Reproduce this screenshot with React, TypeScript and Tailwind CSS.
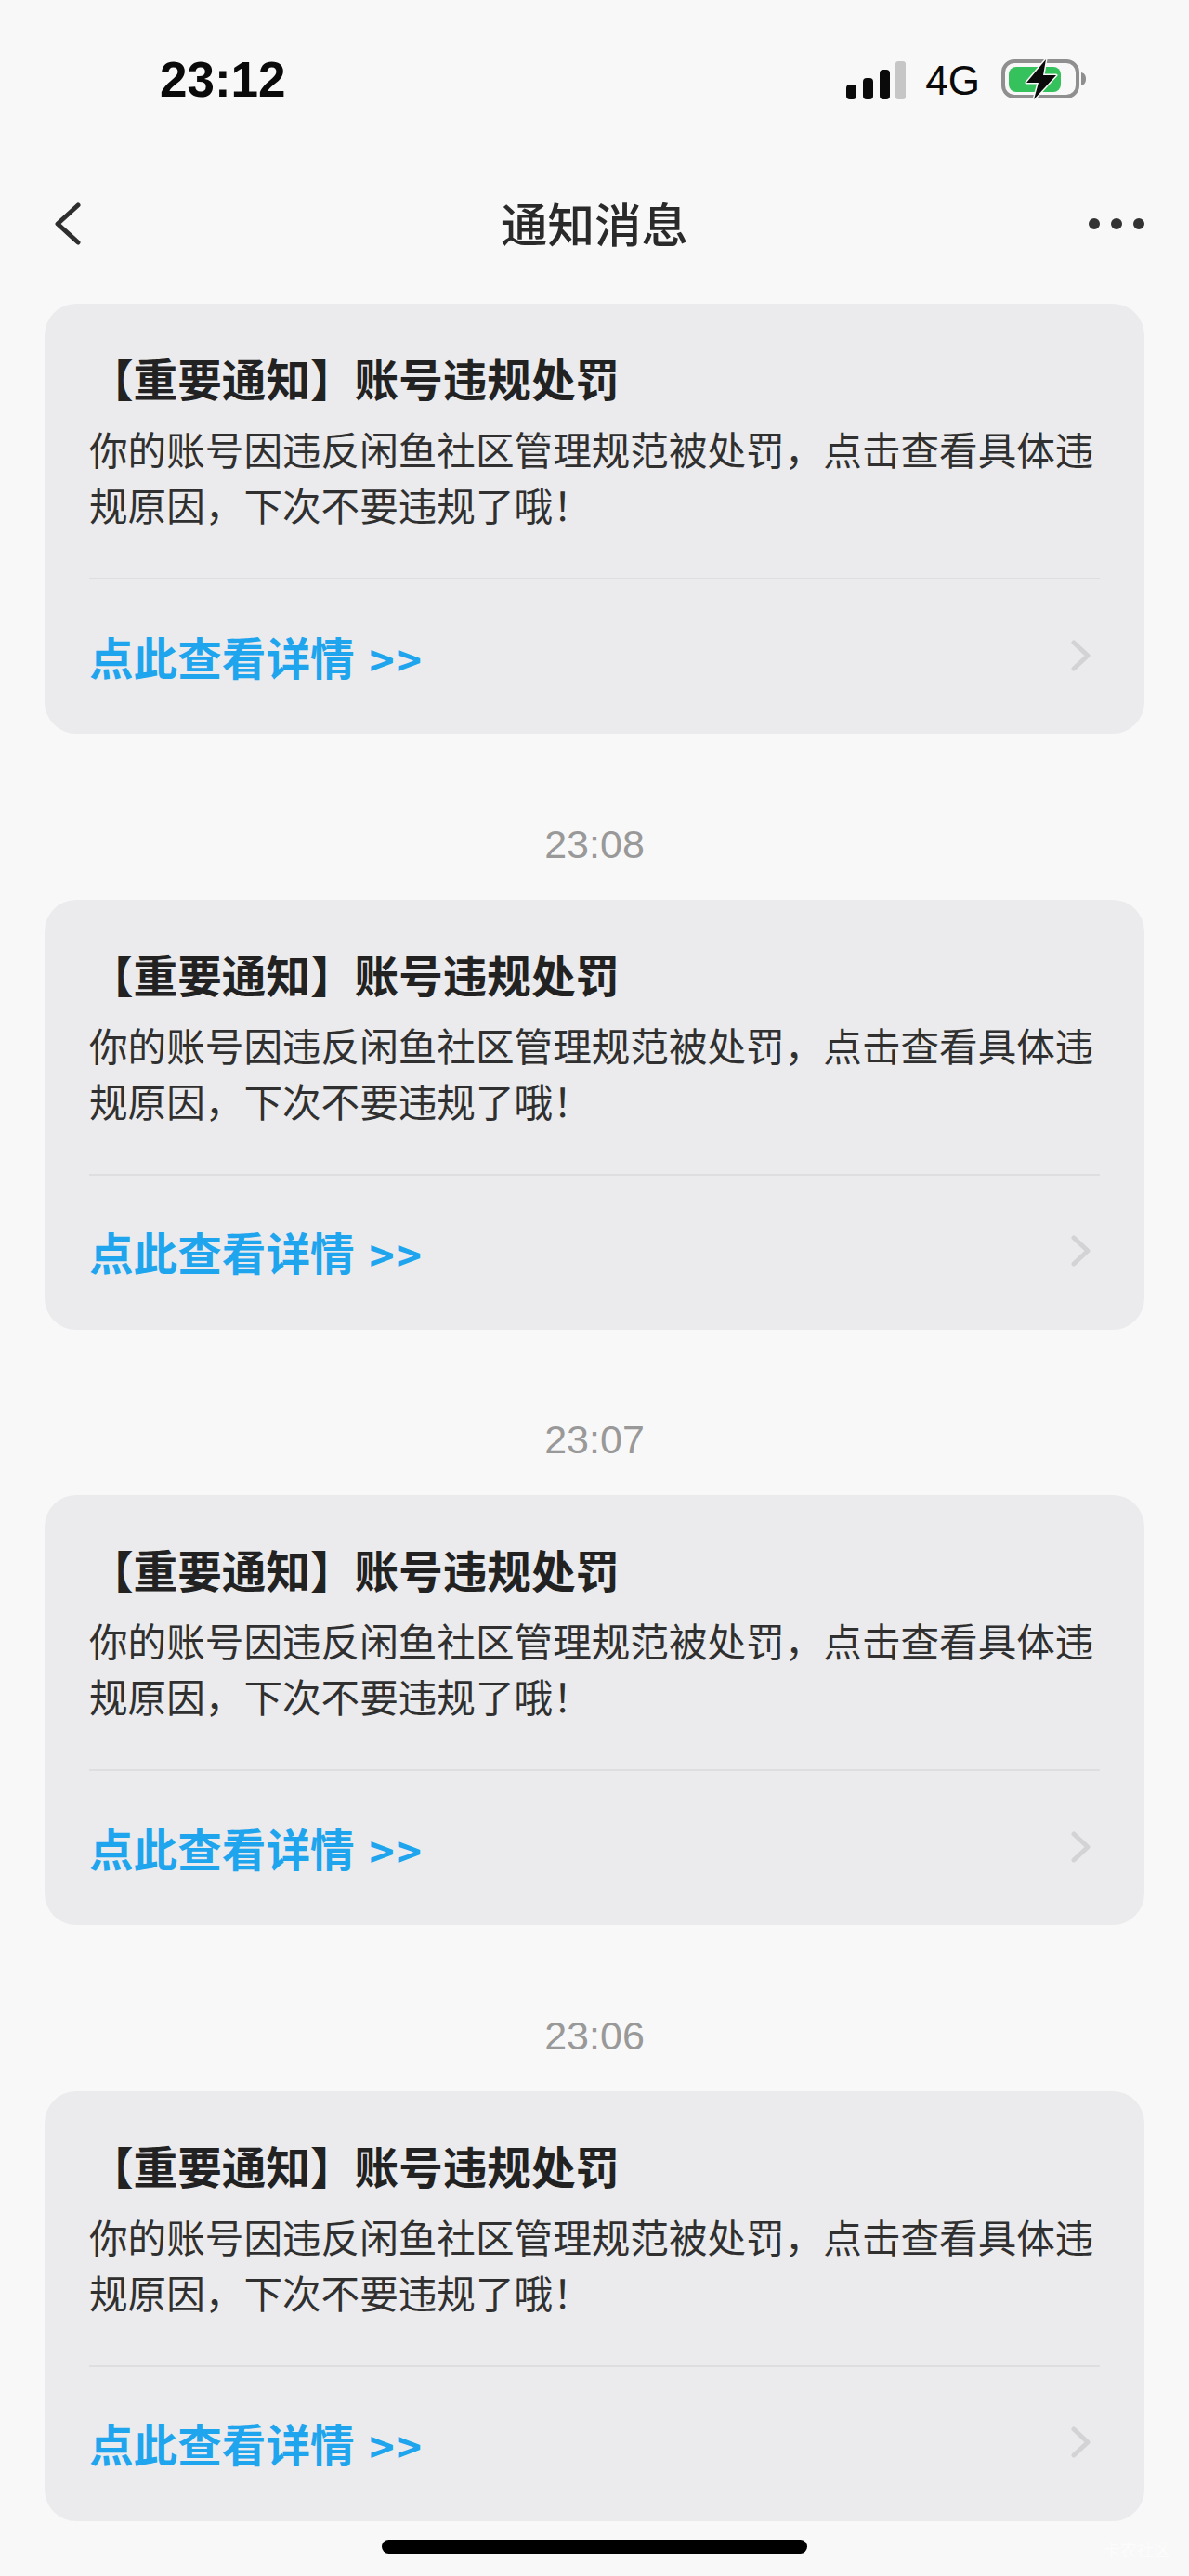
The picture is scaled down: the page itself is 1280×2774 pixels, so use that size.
const cjk = "font-['Noto_Sans_CJK_SC','Noto_Sans_CJK_TC',sans-serif]";
const latin = "font-['Liberation_Sans',Arial,sans-serif]";

function SignalIcon() {
  return (
    <svg width="66" height="42" viewBox="0 0 66 42" className="block">
      <rect x="1" y="25" width="11" height="16" rx="4" fill="#0a0a0a" />
      <rect x="19" y="18" width="11" height="23" rx="4" fill="#0a0a0a" />
      <rect x="37" y="9" width="11" height="32" rx="4" fill="#0a0a0a" />
      <rect x="54" y="0" width="11" height="41" rx="3" fill="#c6c6c6" />
    </svg>
  );
}

function BatteryIcon() {
  return (
    <svg width="96" height="46" viewBox="0 0 96 46" className="block">
      <rect x="3" y="3" width="80" height="38" rx="12" fill="none" stroke="#8f8f8f" strokeWidth="4" />
      <path d="M87 15c4 1 5 4 5 7s-1 6-5 7z" fill="#8f8f8f" />
      <rect x="9" y="9" width="56" height="27" rx="8" fill="#35c25c" />
      <path
        d="M49 1 28 26h13l-5 18 24-26H46z"
        fill="#0a0a0a"
        stroke="#f8f8f8"
        strokeWidth="3"
        strokeLinejoin="round"
        paintOrder="stroke"
      />
    </svg>
  );
}

function Card() {
  return (
    <div className={`${cjk} h-[463px] rounded-[34px] bg-[#ebebed] pl-[48px] pr-[48px]`}>
      <div className="pt-[50px] text-[47.6px] leading-[60px] font-bold whitespace-nowrap text-[#222222]">
        【重要通知】账号违规处罚
      </div>
      <div className="mt-[16px] text-[41.6px] leading-[60px] text-[#303030]">
        你的账号因违反闲鱼社区管理规范被处罚，点击查看具体违规原因，下次不要违规了哦！
      </div>
      <div className="mt-[49px] h-[2px] bg-[#dedee0]" />
      <div className="flex h-[165px] items-center justify-between">
        <span className="flex items-center text-[47.6px] leading-[60px] font-semibold whitespace-nowrap text-[#1ea5ee]">
          点此查看详情
          <span className="mt-[4px] ml-[16px] text-[46px] tracking-[2px]">&gt;&gt;</span>
        </span>
        <svg width="22" height="34" viewBox="0 0 22 34" className="mr-[9px] mb-[2px] block" fill="none">
          <path d="M3 3 18 17 3 31" stroke="#d3d3d5" strokeWidth="5" strokeLinecap="round" strokeLinejoin="round" />
        </svg>
      </div>
    </div>
  );
}

function Stamp({ time }: { time: string }) {
  return (
    <div className={`${latin} flex h-[178.67px] items-center justify-center pt-[60px] text-[43px] leading-none text-[#999999]`}>
      {time}
    </div>
  );
}

export default function App() {
  return (
    <div className="relative h-[2774px] w-[1280px] overflow-hidden bg-[#f8f8f8]">
      <div className="flex h-[174px] items-center justify-between pr-[107px] pl-[172px]">
        <span className={`${latin} mb-[3px] text-[53px] leading-none font-bold text-[#0a0a0a]`}>23:12</span>
        <div className="flex items-center">
          <SignalIcon />
          <span className={`${latin} mb-[1px] ml-[20px] text-[44px] leading-none text-[#0a0a0a]`}>4G</span>
          <div className="mb-[2px] ml-[22px]">
            <BatteryIcon />
          </div>
        </div>
      </div>

      <div className="flex h-[134px] items-center pr-[48px] pl-[58px]">
        <div className="flex-1">
          <svg width="30" height="46" viewBox="0 0 30 46" fill="none" className="block">
            <path d="M26 3 4 23l22 20" stroke="#2e2e2e" strokeWidth="5" strokeLinecap="round" strokeLinejoin="round" />
          </svg>
        </div>
        <span className={`${cjk} mr-[10px] mb-[4px] text-[50.5px] leading-none font-medium text-[#2a2a2a]`}>通知消息</span>
        <div className="flex flex-1 justify-end">
          <div className="flex w-[60px] items-center justify-between">
            <span className="h-[12px] w-[12px] rounded-full bg-[#333333]" />
            <span className="h-[12px] w-[12px] rounded-full bg-[#333333]" />
            <span className="h-[12px] w-[12px] rounded-full bg-[#333333]" />
          </div>
        </div>
      </div>

      <div className="px-[48px] pt-[19px]">
        <Card />
        <Stamp time="23:08" />
        <Card />
        <Stamp time="23:07" />
        <Card />
        <Stamp time="23:06" />
        <Card />
      </div>

      <div className="mt-[20px] flex justify-center">
        <div className="h-[15px] w-[458px] rounded-full bg-black" />
      </div>

      <span className={`${cjk} absolute right-[20px] bottom-[20px] text-[18px] leading-none text-white/60`}>
        卡农社区
      </span>
    </div>
  );
}
